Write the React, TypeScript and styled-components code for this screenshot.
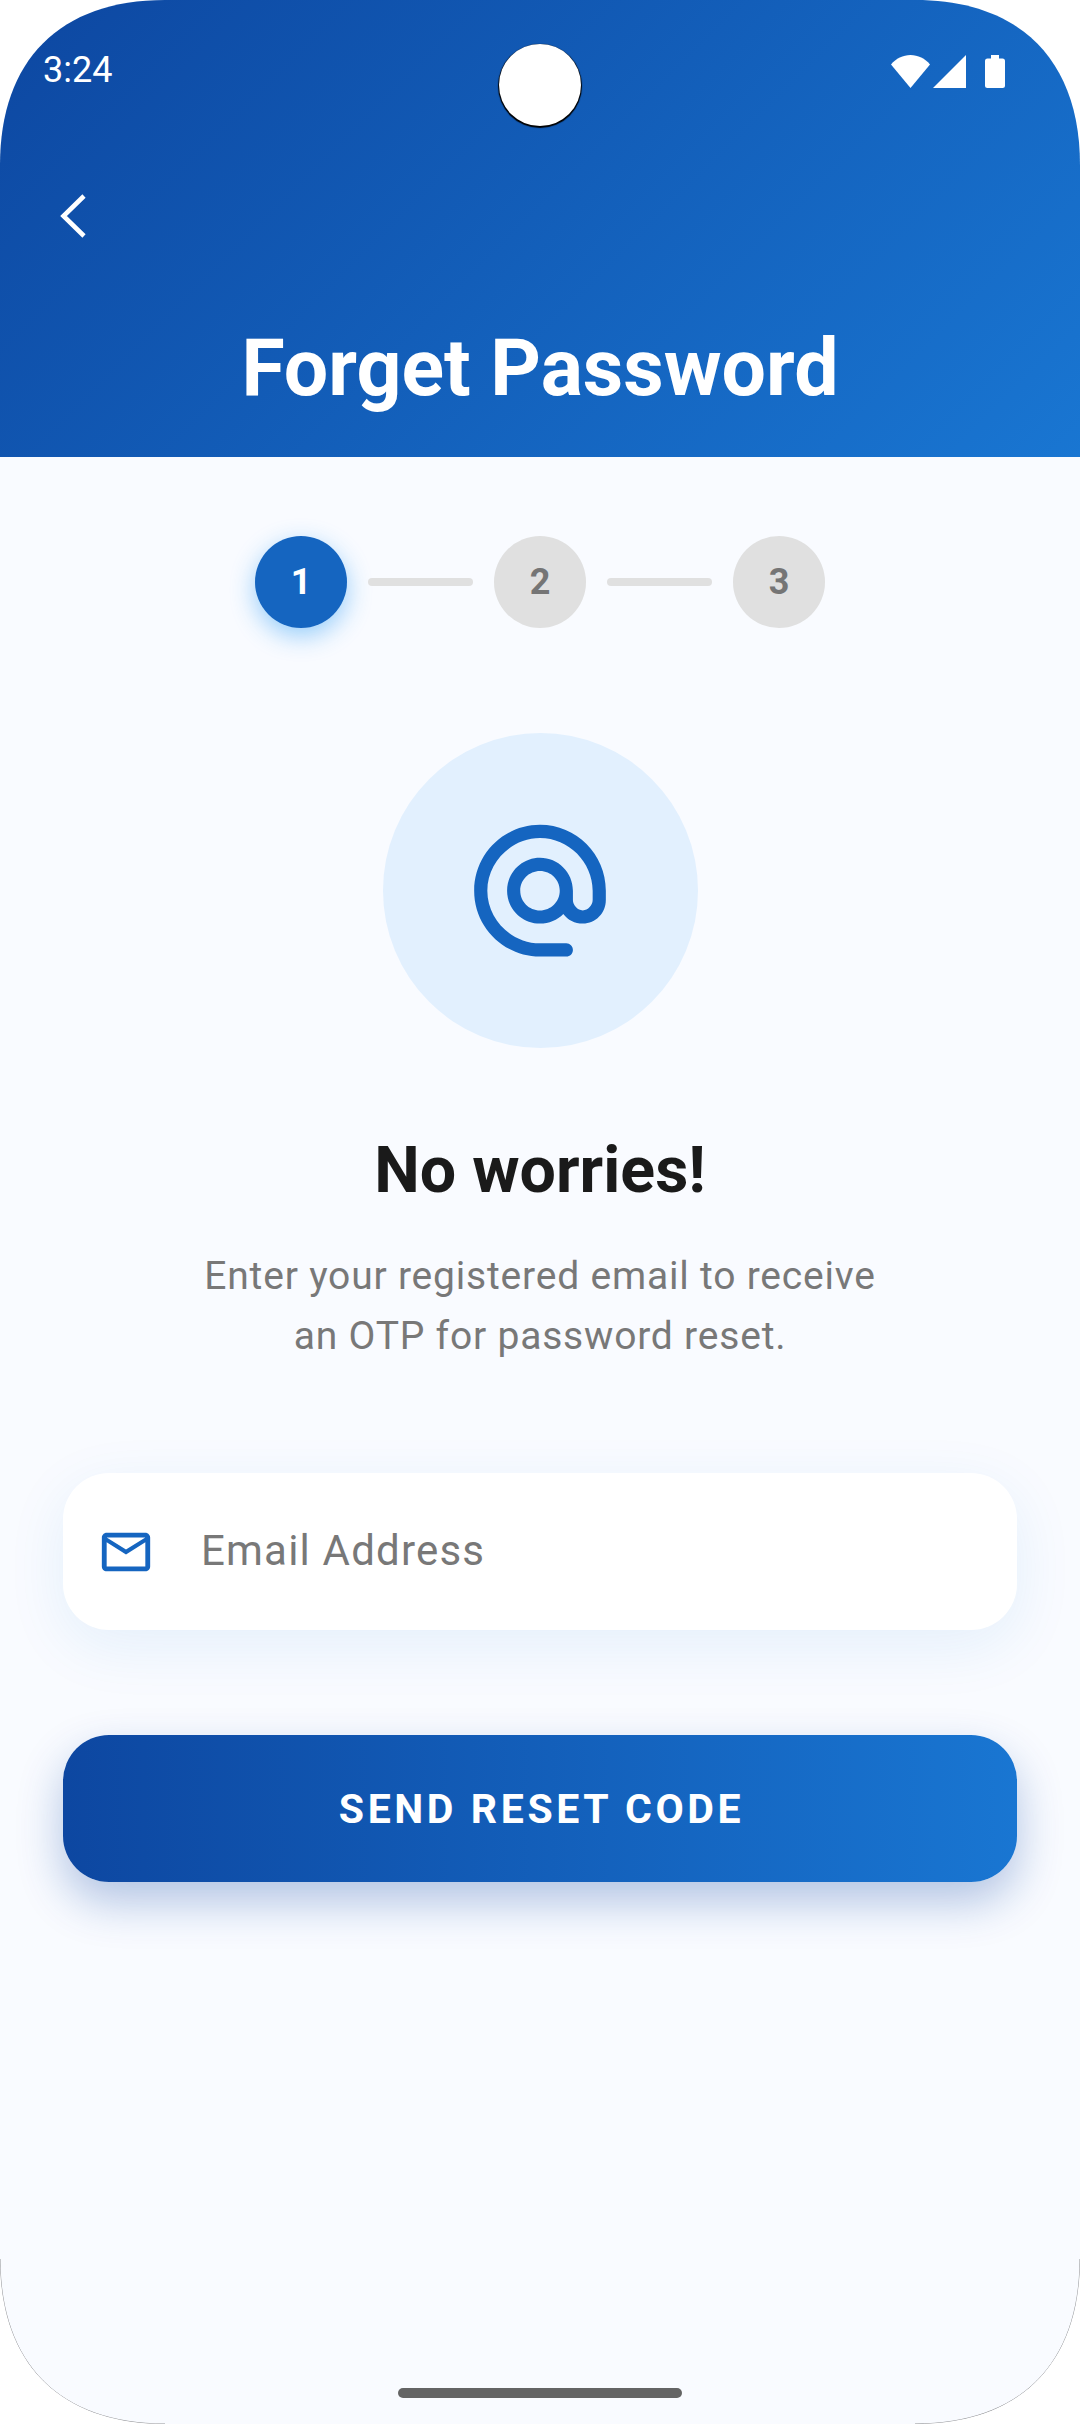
import styled, { createGlobalStyle } from 'styled-components'

const GlobalStyle = createGlobalStyle`
	html, body {
		margin: 0;
		padding: 0;
		background: #ffffff;
	}
	* {
		box-sizing: border-box;
	}
`

const steps = [1, 2, 3]

export default function App() {
	return (
		<>
			<GlobalStyle />
			<Screen>
				<Camera />
				<Header>
					<StatusBar>
						<Clock>3:24</Clock>
						<StatusIcons>
							<svg width='39' height='33' viewBox='0 0 39 33'>
								<path d='M19.5 33 0 9.5C5 3.5 12 0 19.5 0S34 3.5 39 9.5Z' fill='#fff' />
							</svg>
							<svg width='33' height='33' viewBox='0 0 33 33'>
								<path d='M33 0V33H0Z' fill='#fff' />
							</svg>
							<BatteryIcon width='20' height='33' viewBox='0 0 20 33'>
								<path
									d='M6 0h8v3.5h3.5A2.5 2.5 0 0 1 20 6v24.5a2.5 2.5 0 0 1-2.5 2.5h-15A2.5 2.5 0 0 1 0 30.5V6a2.5 2.5 0 0 1 2.5-2.5H6Z'
									fill='#fff'
								/>
							</BatteryIcon>
						</StatusIcons>
					</StatusBar>
					<BackButton>
						<svg width='26' height='44' viewBox='0 0 26 44'>
							<path d='M24 2 3.5 22 24 42' fill='none' stroke='#fff' strokeWidth='4.6' />
						</svg>
					</BackButton>
					<Title>Forget Password</Title>
				</Header>
				<Content>
					<Stepper>
						{steps.map((step) => (
							<StepGroup key={step}>
								{step > 1 && <StepLine />}
								<StepDot $active={step === 1}>{step}</StepDot>
							</StepGroup>
						))}
					</Stepper>
					<IconCircle>
						<svg width='158' height='158' viewBox='0 0 24 24'>
							<path
								d='M12 1.95c-5.52 0-10 4.48-10 10s4.48 10 10 10h4c.55 0 1-.45 1-1s-.45-1-1-1h-4c-4.34 0-8-3.66-8-8s3.66-8 8-8 8 3.66 8 8v1.43c0 .79-.71 1.57-1.5 1.57s-1.5-.78-1.5-1.57v-1.43c0-2.76-2.24-5-5-5s-5 2.24-5 5 2.24 5 5 5c1.38 0 2.64-.56 3.54-1.47.65.89 1.77 1.47 2.96 1.47 1.97 0 3.5-1.6 3.5-3.57v-1.43c0-5.52-4.48-10-10-10zm0 13c-1.66 0-3-1.34-3-3s1.34-3 3-3 3 1.34 3 3-1.34 3-3 3z'
								fill='#1565C0'
							/>
						</svg>
					</IconCircle>
					<Heading>No worries!</Heading>
					<Description>
						Enter your registered email to receive
						<br />
						an OTP for password reset.
					</Description>
					<InputBox>
						<svg width='58' height='58' viewBox='0 0 24 24'>
							<path
								d='M20 4H4c-1.1 0-1.99.9-1.99 2L2 18c0 1.1.9 2 2 2h16c1.1 0 2-.9 2-2V6c0-1.1-.9-2-2-2zm0 14H4V8l8 5 8-5v10zm-8-7L4 6h16l-8 5z'
								fill='#1565C0'
							/>
						</svg>
						<Placeholder>Email Address</Placeholder>
					</InputBox>
					<SendButton>SEND RESET CODE</SendButton>
					<HomeIndicator />
				</Content>
				<CornerEdges width='1080' height='2424' viewBox='0 0 1080 2424'>
					<path d='M0 2259C0 2364 60 2424 165 2424' />
					<path d='M1080 2259C1080 2364 1020 2424 915 2424' />
				</CornerEdges>
			</Screen>
		</>
	)
}

const Screen = styled.div`
	position: relative;
	display: flex;
	flex-direction: column;
	width: 1080px;
	height: 2424px;
	overflow: hidden;
	background: #f9fbff;
	font-family: Roboto, 'Noto Sans', sans-serif;
	clip-path: path(
		'M0 165C0 60 60 0 165 0H915C1020 0 1080 60 1080 165V2259C1080 2364 1020 2424 915 2424H165C60 2424 0 2364 0 2259Z'
	);
`
const CornerEdges = styled.svg`
	position: absolute;
	top: 0;
	left: 0;
	pointer-events: none;
	path {
		fill: none;
		stroke: rgba(0, 0, 0, 0.4);
		stroke-width: 1px;
	}
`
const Camera = styled.div`
	position: absolute;
	top: 44px;
	left: 499px;
	width: 82px;
	height: 82px;
	border-radius: 50%;
	background: #ffffff;
	box-shadow: 0 1px 1px 1px #000000;
`
const Header = styled.header`
	display: flex;
	flex-direction: column;
	height: 457px;
	padding-top: 50px;
	background: linear-gradient(135deg, #0d47a1, #1976d2);
`
const StatusBar = styled.div`
	display: flex;
	justify-content: space-between;
	align-items: center;
	height: 40px;
	padding: 0 75px 0 43px;
`
const Clock = styled.span`
	font-size: 36px;
	line-height: 40px;
	color: #ffffff;
`
const StatusIcons = styled.div`
	display: flex;
	align-items: center;
	gap: 3px;
	margin-top: 3px;
`
const BatteryIcon = styled.svg`
	margin-left: 16px;
`
const BackButton = styled.div`
	display: flex;
	align-items: center;
	height: 50px;
	margin-top: 101px;
	padding-left: 60px;
`
const Title = styled.h1`
	margin: 81px 0 0;
	font-size: 78.8px;
	line-height: 92px;
	font-weight: 700;
	text-align: center;
	color: #ffffff;
`
const Content = styled.main`
	flex: 1;
	display: flex;
	flex-direction: column;
	align-items: center;
	padding: 79px 63px 26px;
`
const Stepper = styled.div`
	display: flex;
	align-items: center;
`
const StepGroup = styled.div`
	display: flex;
	align-items: center;
	gap: 21px;
	margin-left: 21px;
	&:first-child {
		margin-left: 0;
	}
`
const StepDot = styled.div<{ $active: boolean }>`
	display: flex;
	justify-content: center;
	align-items: center;
	width: 92px;
	height: 92px;
	border-radius: 50%;
	font-size: 36px;
	font-weight: 700;
	color: ${(p) => (p.$active ? '#ffffff' : '#757575')};
	background: ${(p) => (p.$active ? '#1565c0' : '#e0e0e0')};
	box-shadow: ${(p) => (p.$active ? '0 8px 24px rgba(33, 150, 243, 0.45)' : 'none')};
`
const StepLine = styled.div`
	width: 105px;
	height: 8px;
	border-radius: 4px;
	background: #e0e0e0;
`
const IconCircle = styled.div`
	display: flex;
	justify-content: center;
	align-items: center;
	width: 315px;
	height: 315px;
	margin-top: 105px;
	border-radius: 50%;
	background: #e2f0fe;
`
const Heading = styled.h2`
	margin: 84px 0 0;
	font-size: 64.5px;
	line-height: 76px;
	font-weight: 700;
	text-align: center;
	color: #1a1a1a;
`
const Description = styled.p`
	margin: 38px 0 0;
	font-size: 39px;
	line-height: 60px;
	letter-spacing: 0.8px;
	text-align: center;
	color: #787878;
`
const InputBox = styled.div`
	display: flex;
	align-items: center;
	gap: 46px;
	width: 100%;
	height: 157px;
	margin-top: 107px;
	padding-left: 34px;
	border-radius: 46px;
	background: #ffffff;
	box-shadow: 0 16px 60px rgba(25, 118, 210, 0.09);
`
const Placeholder = styled.span`
	margin-bottom: 2px;
	font-size: 42px;
	letter-spacing: 1.2px;
	color: #787878;
`
const SendButton = styled.button`
	width: 100%;
	height: 147px;
	margin-top: 105px;
	padding: 0 0 0 3px;
	border: none;
	border-radius: 46px;
	font-family: inherit;
	font-size: 41px;
	font-weight: 700;
	letter-spacing: 3.6px;
	color: #ffffff;
	background: linear-gradient(90deg, #0d47a1, #1976d2);
	box-shadow: 0 20px 45px rgba(13, 71, 161, 0.3);
`
const HomeIndicator = styled.div`
	width: 284px;
	height: 10px;
	margin-top: auto;
	border-radius: 5px;
	background: #646464;
`
